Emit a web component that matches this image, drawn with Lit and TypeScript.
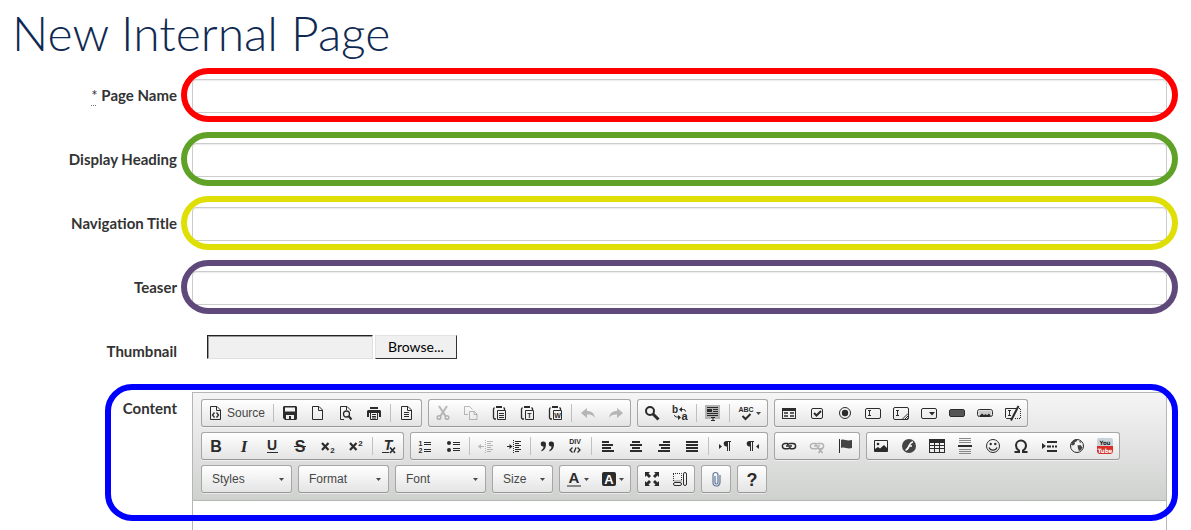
import { LitElement, html, svg, css } from "lit";
import { customElement } from "lit/decorators.js";

const DOC = svg`<path class="s" d="M2.5 1.500h6.500l3.500 3.500v9.500h-10zM8.500 1.500v4h4"/>`;
const CLIP = svg`<path class="s" stroke-width="1.300" d="M5 14H3.500L2.500 13V4l1-1.500M12.500 2.500l1 1V5"/><path d="M5 1h6v2H5z"/><path class="s" d="M6.500 5.500h8v9h-8z"/>`;
const IBEAM = svg`<path class="s" d="M3 5.500h3M3 10.500h3M4.500 5v6"/>`;
const LINES = svg`<path class="s" d="M9 3.500h6M9 5.500h4M9 7.500h6M9 9.500h4M9 11.500h6M9 13.500h4"/><path class="s" d="M7.500 2v13" stroke-dasharray="1 1"/>`;
const CHAIN = svg`<path class="s" stroke-width="1.500" d="M7 5.500H4a2.600 2.600 0 0 0 0 5.200h3a2.600 2.600 0 0 0 2.400-1.600M9 10.700h3a2.600 2.600 0 0 0 0-5.200H9a2.600 2.600 0 0 0-2.400 1.600M5 8h6"/>`;

const ICONS: Record<string, unknown> = {
  source: svg`${DOC}<path class="s" stroke-width="1.300" d="M6.500 7.500l-2 2.500 2 2.500M8.500 7.500l2 2.500-2 2.500"/>`,
  save: svg`<path fill-rule="evenodd" d="M2 1h12l1 1v12l-1 1H3l-2-2V2zM3 2.500v4h10v-4zM4 10v4h3v-3h2v3h3v-4z"/>`,
  newpage: DOC,
  preview: svg`<path class="s" d="M6 14.500H2.500v-13H9l3.500 3.500v1M8.500 2v3"/><circle class="s" cx="8.500" cy="9" r="3" stroke-width="1.300"/><path class="s" stroke-width="2" d="M10.500 11l3 3.500"/>`,
  print: svg`<path d="M4 2h8v2H4zM1 6l1-1h12l1 1v6h-2V8H3v4H1z"/><path class="s" d="M4.500 8v6.500h7V8M6 9.500h4M6 11.500h4M6 13h4"/>`,
  templates: svg`${DOC}<path class="s" d="M5 7.500h5M5 9.500h5M5 11.500h5"/>`,
  cut: svg`<path class="s" stroke-width="2" d="M4 1l6.500 10M12 1L5.500 11"/><circle class="s" cx="4" cy="12.500" r="1.800" stroke-width="1.500"/><circle class="s" cx="12" cy="12.500" r="1.800" stroke-width="1.500"/>`,
  copy: svg`<path class="s" d="M5 9.500H1.500v-8h5l3 3M6.500 6.500h5l2.500 2.500v5.500H6.500v-8M11 6.500v3h3"/>`,
  paste: svg`${CLIP}<path class="s" d="M8 8.500h5M8 10.500h5M8 12.500h5"/>`,
  pastetext: svg`${CLIP}<text x="10.500" y="13" font-size="7">T</text>`,
  pasteword: svg`${CLIP}<text x="10.500" y="13" font-size="7">W</text>`,
  undo: svg`<path d="M1 8l6-5v3c5 0 7 2 8 7-2-3-4-3.500-8-3.500V13z"/>`,
  redo: svg`<path d="M15 8L9 3v3C4 6 2 8 1 13c2-3 4-3.500 8-3.500V13z"/>`,
  find: svg`<circle class="s" cx="6" cy="6" r="4" stroke-width="2"/><path class="s" stroke-width="3" d="M9 9l5.500 5.500"/>`,
  replace: svg`<text x="3" y="8" font-size="10">b</text><text x="12.500" y="15" font-size="11">a</text><path class="s" d="M8 4.500h3.500a2 2 0 0 1 2 2M2.500 10a2 2 0 0 0 2 2H8"/><path d="M7 4.500l3-2.500v5zM9 12.500L6 10v5z"/>`,
  selectall: svg`<path fill="#b4b4b4" d="M0 0h15v14H0z"/><path class="s" d="M2 2.500h11M8 4.500h5M8 6.500h5M2 8.500h11M2 10.500h11M6 12.500h4M6 15.500h4M8 12v4"/><path d="M2 4h5v3H2z"/>`,
  scayt: svg`<text x="8" y="7" font-size="7">ABC</text><path class="s" stroke-width="2" d="M4.500 11l3 3 5-5"/>`,
  form: svg`<path fill-rule="evenodd" d="M1 3h14v11H1zM2 6v7h12V6z"/><path class="s" stroke-width="1.500" d="M3 8h4M9 8h4M3 11h4M9 11h4"/>`,
  checkbox: svg`<rect class="s" x="2.500" y="3.500" width="11" height="10" rx="1.500"/><path class="s" stroke-width="2" d="M5 8l2.500 2.500L12 6"/>`,
  radio: svg`<circle class="s" cx="8" cy="8" r="5.500"/><circle cx="8" cy="8" r="3.200"/>`,
  textfield: svg`<rect class="s" x=".5" y="3.500" width="15" height="10" rx="1.500"/>${IBEAM}`,
  textarea: svg`<rect class="s" x=".5" y="2.500" width="15" height="12" rx="1.500"/>${IBEAM}<path class="s" d="M9 14.500L15 8.500M11.500 14.500l3.500-3.500M13.500 14.500l1.500-1.500"/>`,
  select: svg`<rect class="s" x=".5" y="3.500" width="15" height="10" rx="1.500"/><path d="M8 7h6l-3 3.500z"/>`,
  button: svg`<rect class="s" x=".5" y="4.500" width="15" height="7" rx="1.500"/><path fill="#555" d="M1 5h14v6H1z"/>`,
  imagebutton: svg`<rect class="s" x=".5" y="4.500" width="15" height="7" rx="2"/><path fill="#ccc" d="M1.500 5.500h13v4h-13z"/><path d="M2 11l3-2.500L7 10l1.500-1L10 10l2-1.500 2 2.500z"/>`,
  hidden: svg`<path class="s" d="M8 13.500H1.500l-1-1v-9h11"/>${IBEAM}<path class="s" stroke-width="2" d="M13.500 1L6 15.500"/><path class="s" d="M12 3.500h3.500v10H9" stroke-dasharray="1 1"/>`,

  bold: svg`<text x="8" y="14" font-size="16">B</text>`,
  italic: svg`<text class="serif" x="8" y="14" font-size="17" font-style="italic">I</text>`,
  underline: svg`<text x="8" y="12" font-size="14">U</text><path class="s" d="M3 14.500h11"/>`,
  strike: svg`<text x="8" y="14" font-size="16">S</text><path class="s" d="M2 8.500h12"/>`,
  subscript: svg`<path class="s" stroke-width="2.200" d="M2 5l6.500 7M8.500 5L2 12"/><text x="12.500" y="15" font-size="8">2</text>`,
  superscript: svg`<path class="s" stroke-width="2.200" d="M2 5l6.500 7M8.500 5L2 12"/><text x="12.500" y="8" font-size="8">2</text>`,
  removeformat: svg`<text x="7" y="12" font-size="14" font-style="italic">T</text><path class="s" d="M1 14.500h7"/><path class="s" stroke-width="1.700" d="M9 9.500l5 5.500M14 9.500L9 15"/>`,
  ol: svg`<text x="3.500" y="8" font-size="7">1</text><text x="3.500" y="15" font-size="7">2</text><path class="s" d="M7 4.500h7M7 6.500h7M7 11.500h7M7 13.500h7"/>`,
  ul: svg`<circle cx="4" cy="5" r="2"/><circle cx="4" cy="12" r="2"/><path class="s" d="M8 4.500h7M8 6.500h7M8 10.500h7M8 12.500h7"/>`,
  outdent: svg`${LINES}<path class="s" d="M2 8.500h4"/><path d="M0 8.500L3 6v5z"/>`,
  indent: svg`${LINES}<path class="s" d="M1 8.500h3"/><path d="M6.500 8.500l-3-2.500v5z"/>`,
  quote: svg`<path d="M4 3.500a2.500 2.500 0 0 1 3 2.500c0 4-1.500 6-4.500 7.500v-1.500C4 11 4.500 10 4.500 8.500A2.500 2.500 0 1 1 4 3.500zM12 3.500a2.500 2.500 0 0 1 3 2.500c0 4-1.500 6-4.500 7.500v-1.500c1.500-1 2-2 2-3.500A2.500 2.500 0 1 1 12 3.500z"/>`,
  div: svg`<text x="8" y="6" font-size="7">DIV</text><path class="s" stroke-width="1.300" d="M5.500 9.500L3 12l2.500 2.500M10.500 9.500L13 12l-2.500 2.500M9 9.500l-2 5"/>`,
  left: svg`<path d="M2 3h7v2H2zM2 6h11v2H2zM2 9h9v2H2zM2 12h12v2H2z"/>`,
  center: svg`<path d="M4 3h8v2H4zM2 6h12v2H2zM4 9h8v2H4zM2 12h12v2H2z"/>`,
  right: svg`<path d="M7 3h7v2H7zM3 6h11v2H3zM5 9h9v2H5zM2 12h12v2H2z"/>`,
  justify: svg`<path d="M2 3h12v2H2zM2 6h12v2H2zM2 9h12v2H2zM2 12h12v2H2z"/>`,
  ltr: svg`<path d="M2 6l3 2.500L2 11z"/><path d="M9 3h5v1h-1v9h-1V4h-1v9h-1V8.500a2.700 2.700 0 0 1-1-5.500z"/>`,
  rtl: svg`<path d="M14 6l-3 2.500 3 2.500z"/><path d="M4 3h5v1H8v9H7V4H6v9H5V8.500A2.700 2.700 0 0 1 4 3z"/>`,
  link: CHAIN,
  unlink: svg`${CHAIN}<path class="s" stroke-width="1.700" d="M9.500 10l4 5M13.500 10l-4 5"/>`,
  flag: svg`<path class="s" d="M2.500 1v14"/><path fill="#444" d="M4 2c3-1.500 5 1.500 11 0v8c-5 1.500-7-1.500-11 0z"/>`,
  image: svg`<path class="s" d="M1.500 2.500h13v11h-13z"/><circle cx="5" cy="6" r="1.300"/><path d="M2 13v-2l3-2 2 1.500L11 7l3 3v3z"/>`,
  flash: svg`<circle cx="8" cy="8" r="7" fill="#444"/><path fill="none" stroke="#fff" stroke-width="1.700" d="M12 4C7.500 4 8.500 12 4.500 12M7.500 8H11"/>`,
  table: svg`<path fill-rule="evenodd" d="M0 1h16v14H0zM1 5v2h4V5zM6 5v2h4V5zM11 5v2h4V5zM1 8v2h4V8zM6 8v2h4V8zM11 8v2h4V8zM1 11v3h4v-3zM6 11v3h4v-3zM11 11v3h4v-3z"/>`,
  hr: svg`<path fill="none" stroke="#888" d="M2 .5h12M2 2.500h12M2 4.500h12M2 11.500h12M2 13.500h12M2 15.500h12"/><path d="M1 7h14v2H1z"/>`,
  smiley: svg`<circle class="s" cx="8" cy="8" r="6.500"/><circle cx="5.700" cy="6" r="1.200"/><circle cx="10.300" cy="6" r="1.200"/><path class="s" stroke-width="1.200" d="M4 9.500c1.500 3.500 6.500 3.500 8 0"/>`,
  omega: svg`<path class="s" stroke-width="2" d="M1.500 14H6v-1.500C3.500 11 3 9 3 7.500a5 5 0 0 1 10 0C13 9 12.500 11 10 12.500V14h4.500"/>`,
  pagebreak: svg`<path d="M1 5l4 3-4 3zM6 3h10v2H6zM6 12h10v2H6z"/><path class="s" d="M6 8.500h10" stroke-width="2" stroke-dasharray="4 1 2 1"/>`,
  globe: svg`<circle class="s" cx="8" cy="8" r="6.500"/><path fill="#444" d="M3 4l3-2.500 2.500.5-1 1.500-2 1 .5 1.500-2 1.500L2 7zM10 2.500l2.500 1.500-1.500 1zM8.500 7.500l3-.5 2 2.500-1.500 2.500-2 1-1-2.500z"/>`,
  youtube: svg`<rect fill="#c9d3d8" width="16" height="16" rx="2"/><path fill="#d9302a" d="M0 8h16v6l-2 2H2l-2-2z"/><text class="cond" x="8" y="6.500" font-size="7" fill="#222">You</text><text class="cond" x="8" y="14.500" font-size="7" fill="#fff">Tube</text>`,

  textcolor: svg`<text x="8" y="12" font-size="15">A</text><path fill="#888" d="M1 14h14v2H1z"/>`,
  bgcolor: svg`<rect x="1" y="1" width="14" height="14" rx="2"/><text x="8" y="13" font-size="13" fill="#fff">A</text>`,
  maximize: svg`<path d="M1 1h5L4.500 2.500l2.500 2.500-2 2-2.500-2.500L1 6zM15 1h-5l1.500 1.500L9 5l2 2 2.500-2.500L15 6zM1 15h5l-1.500-1.500L7 11 5 9l-2.500 2.500L1 10zM15 15h-5l1.500-1.500L9 11l2-2 2.500 2.500L15 10z"/>`,
  blocks: svg`<path class="s" stroke-dasharray="1 1" d="M1 2.500h8.500V10H1.500V2"/><rect class="s" x="11.500" y="1.500" width="3" height="13" rx="1.500"/><rect class="s" x="1.500" y="11.500" width="8" height="3" rx="1.500"/>`,
  clip: svg`<path fill="none" stroke="#5f7898" stroke-width="1.200" d="M7 5v6.500a1.500 1.500 0 0 0 3 0V4a2.500 2.500 0 0 0-5 0v7.500a3.500 3.500 0 0 0 7 0V4"/>`,
  help: svg`<text x="8" y="15" font-size="18">?</text>`,
};

const NAMES: Record<string, string> = {
  newpage: "New page", pastetext: "Paste as plain text", pasteword: "Paste from Word",
  ol: "Numbered list", ul: "Bulleted list", hr: "Horizontal line", clip: "Attach file",
};

const SEP = "|";
// A trailing "-" marks a disabled button, a trailing "+" one that opens a menu.
const ROWS: string[][][] = [
  [
    ["source", SEP, "save", "newpage", "preview", "print", SEP, "templates"],
    ["cut-", "copy-", "paste", "pastetext", "pasteword", SEP, "undo-", "redo-"],
    ["find", "replace", SEP, "selectall", SEP, "scayt+"],
    ["form", "checkbox", "radio", "textfield", "textarea", "select", "button", "imagebutton", "hidden"],
  ],
  [
    ["bold", "italic", "underline", "strike", "subscript", "superscript", SEP, "removeformat"],
    ["ol", "ul", SEP, "outdent-", "indent", SEP, "quote", "div", SEP, "left", "center", "right", "justify", SEP, "ltr", "rtl"],
    ["link", "unlink-", "flag"],
    ["image", "flash", "table", "hr", "smiley", "omega", "pagebreak", "globe", "youtube"],
  ],
  [["textcolor+", "bgcolor+"], ["maximize", "blocks"], ["clip"], ["help"]],
];

const caret = html`<svg class="caret" viewBox="0 0 5 3" aria-hidden="true"><path d="M0 0h5L2.500 3z" /></svg>`;

@customElement("editor-toolbar")
class EditorToolbar extends LitElement {
  static styles = css`
    :host {
      display: flex;
      flex-direction: column;
      gap: 5px;
      padding: 6px 8px 7px;
      background: linear-gradient(#f5f5f5, #cfd1cf);
      border-bottom: 1px solid #b6b6b6;
      font: 12px/16px "Liberation Sans", Arial, sans-serif;
      color: #474747;
    }
    .row { display: flex; flex-wrap: wrap; gap: 5px 6px; }
    .group {
      display: flex;
      border: 1px solid #a6a6a6;
      border-bottom-color: #979797;
      border-radius: 3px;
      background: linear-gradient(#fff, #e4e4e4);
      box-shadow: 0 1px 0 rgba(255, 255, 255, 0.5);
    }
    button {
      display: flex;
      align-items: center;
      gap: 3px;
      padding: 5px 6px;
      border: 0;
      background: none;
      font: inherit;
      color: inherit;
    }
    button.menu { gap: 2px; }
    button:disabled .icon { opacity: 0.3; }
    .icon { width: 16px; height: 16px; color: #2b2b2b; fill: #2b2b2b; overflow: visible; }
    .icon text { font-family: "Liberation Sans", Arial, sans-serif; font-weight: 700; text-anchor: middle; }
    .icon text.serif { font-family: "Liberation Serif", serif; }
    .icon text.cond { font-family: "Liberation Sans Narrow", "DejaVu Sans Condensed", sans-serif; font-size: 6px; }
    .s { fill: none; stroke: currentColor; }
    .caret { width: 5px; height: 3px; fill: #474747; }
    .sep { width: 1px; height: 18px; margin: 4px 2px; background: #c0c0c0; }
    .combo { display: grid; width: 89px; align-items: center; }
    .combo.small { width: 59px; }
    .combo select {
      grid-area: 1 / 1;
      appearance: none;
      width: 100%;
      height: 26px;
      padding: 0 10px;
      border: 0;
      background: none;
      font: inherit;
      color: inherit;
    }
    .combo .caret { grid-area: 1 / 1; justify-self: end; margin-right: 7px; pointer-events: none; }
  `;

  private item(spec: string) {
    if (spec === SEP) return html`<span class="sep"></span>`;
    const name = spec.replace(/[-+]$/, "");
    const menu = spec.endsWith("+");
    return html`<button
      type="button"
      class=${menu ? "menu" : ""}
      aria-label=${NAMES[name] ?? name}
      ?disabled=${spec.endsWith("-")}
    ><svg class="icon" viewBox="0 0 16 16" aria-hidden="true">${ICONS[name]}</svg>${name === "source" ? html`<span>Source</span>` : ""}${menu ? caret : ""}</button>`;
  }

  render() {
    return ROWS.map(
      (row, i) => html`<div class="row">
        ${i === 2
          ? ["Styles", "Format", "Font", "Size"].map(
              (n) => html`<div class="group combo ${n === "Size" ? "small" : ""}">
                <select aria-label=${n}><option>${n}</option></select>${caret}
              </div>`
            )
          : ""}
        ${row.map((g) => html`<div class="group">${g.map((b) => this.item(b))}</div>`)}
      </div>`
    );
  }
}

@customElement("app-root")
class AppRoot extends LitElement {
  static styles = css`
    :host {
      display: block;
      overflow: hidden;
      height: 100vh;
      background: #fff;
      color: #333;
      font: 15px/20px Lato, sans-serif;
    }
    h1 { margin: 0; padding: 3px 12px 16px; font-size: 48px; line-height: 60px; font-weight: 300; color: #0f2a52; }
    form { display: flex; flex-direction: column; gap: 30px; padding-right: 24px; }
    .field { display: grid; grid-template-columns: 177px minmax(0, 1fr); column-gap: 15px; position: relative; }
    .label { padding-top: 6px; text-align: right; font-weight: 700; }
    abbr { font-weight: 400; text-decoration: underline dotted #777 1px; text-underline-offset: 4px; }
    .control { position: relative; }
    .text {
      display: block;
      box-sizing: border-box;
      width: 100%;
      height: 34px;
      padding: 6px 12px;
      border: 1px solid #ccc;
      border-radius: 4px;
      background: #fff;
      box-shadow: inset 0 1px 1px rgba(0, 0, 0, 0.075);
      font: inherit;
    }
    .ring { position: absolute; inset: -11px -11px -9px; border: 6px solid; border-radius: 27px; pointer-events: none; }
    .red { color: #f00; }
    .green { color: #5fa227; }
    .yellow { color: #dfdf06; }
    .purple { color: #5f497a; }
    .blue { color: #00f; inset: -8px -11px auto 105px; height: 125px; }
    .file { display: flex; gap: 2px; height: 24px; padding-left: 15px; }
    .path { box-sizing: border-box; width: 166px; border: 1px solid; border-color: #222 #e0e0e0 #e0e0e0 #222; background: #f0f0f0; box-shadow: inset 1px 1px 0 #999; }
    .browse {
      width: 82px;
      padding: 0;
      border: 1px solid;
      border-color: #e3e3e3 #333 #333 #e3e3e3;
      background: #f0f0f0;
      font: inherit;
      font-size: 14px;
      color: #000;
    }
    .thumb { height: 27px; }
    .editor { border: 1px solid #b6b6b6; }
    .body { display: block; box-sizing: border-box; width: 100%; height: 200px; border: 0; resize: none; }
  `;

  private field(id: string, label: string, color: string, required = false) {
    return html`<div class="field">
      <label class="label" for=${id}>${required ? html`<abbr title="required">*</abbr> ` : ""}${label}</label>
      <div class="control">
        <input class="text" type="text" id=${id} ?required=${required} />
        <span class="ring ${color}"></span>
      </div>
    </div>`;
  }

  render() {
    return html`
      <h1>New Internal Page</h1>
      <form>
        ${this.field("name", "Page Name", "red", true)}
        ${this.field("heading", "Display Heading", "green")}
        ${this.field("nav", "Navigation Title", "yellow")}
        ${this.field("teaser", "Teaser", "purple")}
        <div class="field thumb">
          <label class="label" for="thumbnail">Thumbnail</label>
          <div class="file">
            <input class="path" type="text" id="thumbnail" readonly />
            <button class="browse" type="button">Browse...</button>
          </div>
        </div>
        <div class="field">
          <label class="label" for="content">Content</label>
          <div class="editor">
            <editor-toolbar></editor-toolbar>
            <textarea class="body" id="content"></textarea>
          </div>
          <span class="ring blue"></span>
        </div>
      </form>
    `;
  }
}
